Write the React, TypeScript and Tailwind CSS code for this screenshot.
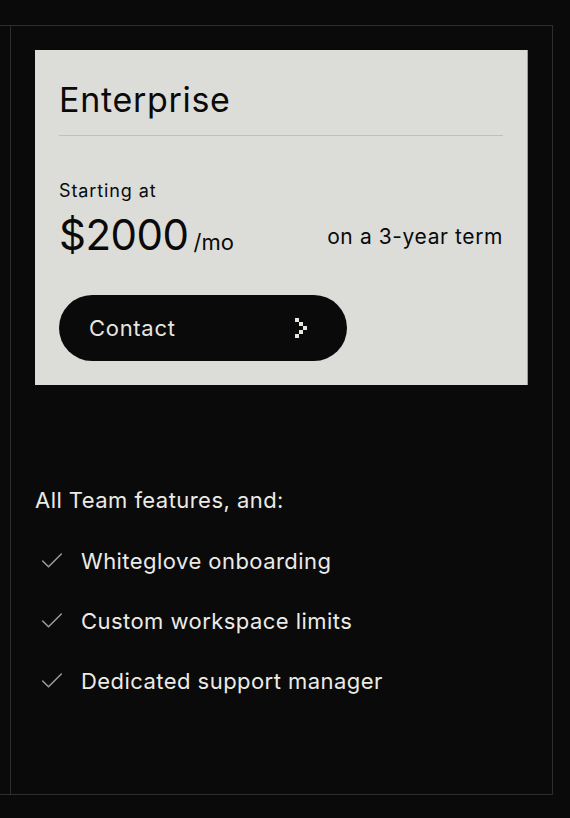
import { Check } from "lucide-react";

const features = [
  "Whiteglove onboarding",
  "Custom workspace limits",
  "Dedicated support manager",
];

function PixelChevron() {
  return (
    <svg width="12" height="20" viewBox="0 0 12 20" className="shrink-0">
      <rect x="0" y="0" width="4" height="4" fill="#e6e6e0" />
      <rect x="4" y="4" width="4" height="4" fill="#e6e6e0" />
      <rect x="8" y="8" width="4" height="4" fill="#e6e6e0" />
      <rect x="4" y="12" width="4" height="4" fill="#e6e6e0" />
      <rect x="0" y="16" width="4" height="4" fill="#e6e6e0" />
    </svg>
  );
}

export default function App() {
  return (
    <div
      className="w-[570px] h-[818px] bg-[#0a0a0a] pt-[25px] overflow-hidden"
      style={{ fontFamily: "Inter, 'Noto Sans', sans-serif" }}
    >
      <div className="flex w-[553px] h-[770px] border-t border-b border-r border-[#2e2e2e]">
        <div className="w-[11px] shrink-0 border-r border-[#2e2e2e]" />
        <div className="flex-1 p-6 flex flex-col">
          <div className="bg-[#dcddd8] text-[#0a0a0a] px-6 pt-[28px] pb-6 mr-px shadow-[1px_0_0_#9d9e99] h-[335px]">
            <h2 className="text-[34px] leading-[44px] tracking-[0.7px]">Enterprise</h2>
            <div className="h-px bg-[#bfc0bb] mt-[13px]" />
            <p className="text-[18px] leading-6 mt-[43px] tracking-[0.9px]">Starting at</p>
            <div className="flex items-center justify-between mt-[8px]">
              <div className="flex items-baseline gap-[5px]">
                <span className="text-[42px] leading-[48px] tracking-[-0.5px]">$2000</span>
                <span className="text-[22px]">/mo</span>
              </div>
              <span className="text-[21px] leading-[28px] tracking-[0.6px] mt-[4px]">on a 3-year term</span>
            </div>
            <button className="mt-[36px] w-[288px] h-[66px] rounded-full bg-[#0a0a0a] text-[#e6e6e0] flex items-center justify-between pl-[30px] pr-[40px]">
              <span className="text-[22px] tracking-[0.7px]">Contact</span>
              <PixelChevron />
            </button>
          </div>
          <div className="mt-[100px] text-[#ecebe6]">
            <p className="text-[22px] leading-[30px] tracking-[0.45px]">All Team features, and:</p>
            <ul className="mt-[31px] flex flex-col gap-[30px]">
              {features.map((f) => (
                <li key={f} className="flex items-center gap-[15px]">
                  <Check size={28} strokeWidth={1.3} className="text-[#9a9aa2] ml-[3px]" />
                  <span className="text-[22px] leading-[30px] tracking-[0.45px]">{f}</span>
                </li>
              ))}
            </ul>
          </div>
        </div>
      </div>
    </div>
  );
}
